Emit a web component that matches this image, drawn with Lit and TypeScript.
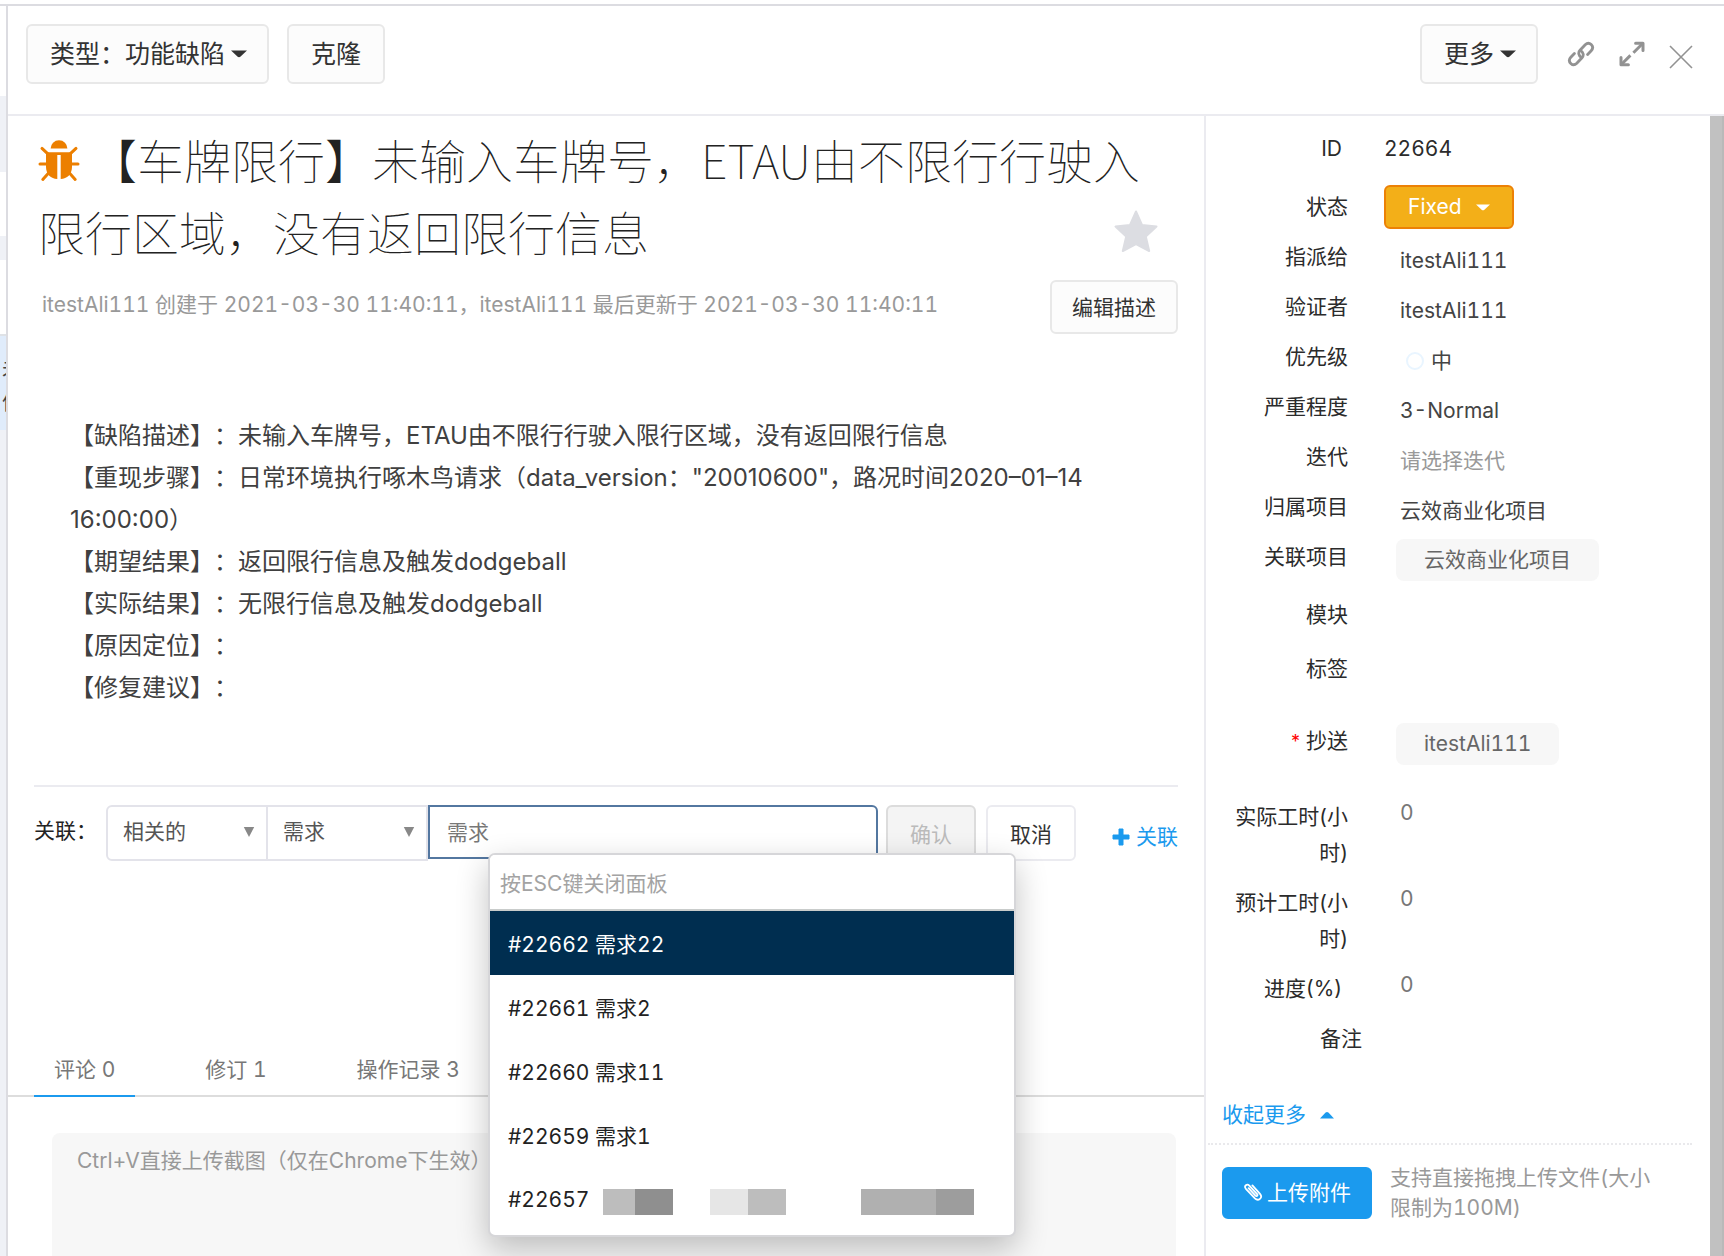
import { LitElement, html, css, nothing } from "lit";
import { customElement, property } from "lit/decorators.js";
import { classMap } from "lit/directives/class-map.js";

const caretDown = html`<svg class="caret" width="16" height="8" viewBox="0 0 16 8" aria-hidden="true">
  <path d="M0 0.5H16L9.6 6.6Q8 7.8 6.4 6.6Z" fill="currentColor" />
</svg>`;

const bugIcon = html`<svg class="bug" width="42" height="42" viewBox="0 0 42 42" role="img" aria-label="缺陷">
  <g fill="#ec7f00">
    <path d="M12.6 8.6A8.4 8.4 0 0 1 29.4 8.6Z" />
    <path d="M8 12.2H34V27C34 34 29 39 22.7 39V15H19.3V39C13 39 8 34 8 27Z" />
  </g>
  <g stroke="#ec7f00" stroke-width="3" stroke-linecap="round" fill="none">
    <path d="M4 8.4L9.6 13.6M38 8.4L32.4 13.6M2 24H8M34 24H40M4.8 39.4L10.6 33M37.2 39.4L31.4 33" />
  </g>
</svg>`;

const linkIcon = html`<svg width="28" height="28" viewBox="0 0 28 28" aria-hidden="true">
  <g fill="none" stroke="#929292" stroke-width="2.8" stroke-linecap="round">
    <path d="M14.2 17.4C11.6 15.6 10.9 12.6 13 10.3L18.2 4.8C20.2 2.8 22.6 3 24.2 4.6C26 6.4 26 8.8 24.2 10.7L20.6 14.4" />
    <path d="M13.8 10.6C16.4 12.4 17.1 15.4 15 17.7L9.8 23.2C7.8 25.2 5.4 25 3.8 23.4C2 21.6 2 19.2 3.8 17.3L7.4 13.6" />
  </g>
</svg>`;

const expandIcon = html`<svg width="28" height="28" viewBox="0 0 28 28" aria-hidden="true">
  <g fill="none" stroke="#929292" stroke-width="3">
    <path d="M15.4 12.8L24.4 3.8M12.4 15.4L3.6 24.2" />
    <path d="M17.6 3.2H25V10.6M3 17.6V24.8H10.4" stroke-linecap="round" stroke-linejoin="round" />
  </g>
</svg>`;

const closeIcon = html`<svg width="24" height="24" viewBox="0 0 24 24" aria-hidden="true">
  <path d="M1 1L23 23M23 1L1 23" stroke="#929292" stroke-width="1.6" />
</svg>`;

const starIcon = html`<svg width="44" height="42" viewBox="0 0 44 42" aria-hidden="true">
  <path
    d="M22 1.5L28 15L42.5 16.6L31.8 26.6L35.2 41L22 34L8.8 41L12.2 26.6L1.5 16.6L16 15Z"
    fill="#dcdde2" stroke="#dcdde2" stroke-width="2" stroke-linejoin="round" />
</svg>`;

const plusIcon = html`<svg width="18" height="18" viewBox="0 0 18 18" aria-hidden="true">
  <path d="M7 1H11V7H17V11H11V17H7V11H1V7H7Z" fill="currentColor" stroke="currentColor" stroke-linejoin="round" />
</svg>`;

const clipIcon = html`<svg width="20" height="20" viewBox="0 0 20 20" aria-hidden="true">
  <path
    d="M5.6 7.2L12.4 14.6C13.6 15.8 15.2 14.4 14.1 13.1L6.3 4.6C4 2.2 .6 5 2.9 7.8L11.9 17.4C15.4 20.8 20.2 16.6 17 12.8L9.4 4.4"
    fill="none" stroke="currentColor" stroke-width="1.8" stroke-linecap="round" />
</svg>`;

const baseStyles = css`
  *, *::before, *::after { box-sizing: border-box; }
  button, input, select, textarea { font: inherit; color: inherit; margin: 0; }
  button { cursor: pointer; }
  svg { display: block; flex: none; }
  .btn {
    display: inline-flex;
    align-items: center;
    justify-content: center;
    border: 2px solid #e8e8e8;
    border-radius: 6px;
    background: #fcfcfc;
    color: #333;
    white-space: nowrap;
  }
`;

interface Story {
  id: string;
  name: string;
  masked?: boolean;
}

@customElement("story-picker")
export class StoryPicker extends LitElement {
  @property({ attribute: false }) stories: Story[] = [];

  static styles = [
    baseStyles,
    css`
      :host {
        display: block;
        background: #fff;
        border: 2px solid #d6d6d9;
        border-radius: 7px;
        box-shadow: 0 12px 32px rgba(0, 0, 0, 0.24);
        overflow: hidden;
      }
      .search {
        display: block;
        width: 100%;
        height: 56px;
        padding: 2px 10px 0;
        border: 0;
        border-bottom: 2px solid #c9cccb;
        background: #fff;
        outline: 0;
      }
      .search::placeholder { color: #a3a3a3; opacity: 1; }
      .list { list-style: none; margin: 0; padding: 0 0 4px; font-variant-numeric: tabular-nums; }
      .item {
        display: flex;
        align-items: center;
        height: 64px;
        padding: 0 18px;
        color: #222;
      }
      .item.active { background: #002e50; color: #fff; }
      .mask { display: flex; padding-left: 14px; margin-top: 6px; }
      .m { height: 26px; }
      .a { width: 32px; background: #bdbdbd; }
      .b { width: 38px; background: #8f8f8f; margin-right: 37px; }
      .c { width: 38px; background: #e6e6e6; }
      .d { width: 38px; background: #bdbdbd; margin-right: 75px; }
      .e { width: 75px; background: #b0b0b0; }
      .f { width: 38px; background: #9d9d9d; }
    `,
  ];

  render() {
    return html`
      <input class="search" type="text" placeholder="按ESC键关闭面板" aria-label="搜索需求" />
      <ul class="list" role="listbox" aria-label="需求">
        ${this.stories.map(
          (s, i) => html`<li class=${classMap({ item: true, active: i === 0 })} role="option" aria-selected=${i === 0 ? "true" : "false"}>
            <span>#${s.id} ${s.name}</span>${s.masked
              ? html`<span class="mask" aria-hidden="true">
                  <i class="m a"></i><i class="m b"></i><i class="m c"></i><i class="m d"></i><i class="m e"></i><i class="m f"></i>
                </span>`
              : nothing}
          </li>`
        )}
      </ul>
    `;
  }
}

type Kind = "plain" | "status" | "text" | "priority" | "hint" | "chip" | "number" | "empty";

interface Field {
  label: string;
  value?: string;
  kind: Kind;
  size?: string;
  required?: boolean;
  inset?: "latin" | "outdent";
}

const FIELDS: Field[] = [
  { label: "ID", value: "22664", kind: "plain", size: "h58", inset: "latin" },
  { label: "状态", value: "Fixed", kind: "status" },
  { label: "指派给", value: "itestAli111", kind: "text" },
  { label: "验证者", value: "itestAli111", kind: "text" },
  { label: "优先级", value: "中", kind: "priority" },
  { label: "严重程度", value: "3-Normal", kind: "text" },
  { label: "迭代", value: "请选择迭代", kind: "hint" },
  { label: "归属项目", value: "云效商业化项目", kind: "text" },
  { label: "关联项目", value: "云效商业化项目", kind: "chip", size: "h58" },
  { label: "模块", kind: "empty", size: "h54" },
  { label: "标签", kind: "empty", size: "h72" },
  { label: "抄送", value: "itestAli111", kind: "chip", size: "h76", required: true },
  { label: "实际工时(小时)", value: "0", kind: "number", size: "h86", inset: "latin" },
  { label: "预计工时(小时)", value: "0", kind: "number", size: "h86", inset: "latin" },
  { label: "进度(%)", value: "0", kind: "number", inset: "latin" },
  { label: "备注", kind: "empty", size: "h76", inset: "outdent" },
];

@customElement("field-panel")
export class FieldPanel extends LitElement {
  static styles = [
    baseStyles,
    css`
      :host { display: block; border-left: 2px solid #ebebf0; padding: 15px 18px 0 0; color: #333; }
      .fields { margin: 0; padding: 0 0 0 16px; }
      .row { display: grid; grid-template-columns: 126px minmax(0, 1fr); column-gap: 36px; min-height: 50px; }
      .h54 { min-height: 54px; }
      .h58 { min-height: 58px; }
      .h72 { min-height: 72px; }
      .h76 { min-height: 76px; }
      .h86 { min-height: 86px; }
      .label { text-align: right; line-height: 36px; color: #2b2b2b; }
      .latin .label { padding-right: 6px; }
      .hours .label { padding-right: 0; }
      .outdent .label { margin-right: -14px; }
      .req { color: #f00; font-size: 18px; margin-right: 6px; }
      .value { margin: 0; line-height: 36px; font-variant-numeric: tabular-nums; }
      .plain { color: #2b2b2b; }
      .text, .hint, .priority { padding: 4px 0 0 16px; color: #444; }
      .hint { color: #999; }
      .priority { display: flex; align-items: center; gap: 7px; align-self: start; padding-left: 22px; }
      .ring { width: 18px; height: 18px; border: 2px solid #e9f5ff; border-radius: 50%; }
      .number { padding-left: 16px; color: #777; margin-top: -4px; }
      .chip { padding-left: 12px; }
      .tag { display: inline-block; padding: 0 28px; line-height: 42px; border-radius: 8px; background: #f7f7f7; color: #666; }
      .status { margin-top: -4px; }
      .fixed {
        height: 44px;
        padding: 0 22px;
        gap: 14px;
        border-color: #ec8106;
        background: #f3af18;
        color: #fff;
      }
      .fixed .caret { width: 14px; height: 7px; }
      .toggle {
        display: inline-flex;
        align-items: center;
        gap: 14px;
        margin: 0 0 0 16px;
        padding: 0;
        border: 0;
        background: none;
        color: #1b9aee;
        line-height: 36px;
      }
      .upload { display: flex; align-items: flex-start; margin: 10px 0 0 2px; padding: 20px 26px 0 14px; border-top: 2px dotted #e9e9ec; gap: 18px; }
      .attach { flex: none; width: 150px; height: 52px; padding: 0 0 4px; gap: 4px; border-color: #1b9aee; background: #1b9aee; color: #fff; margin-top: 2px; }
      .tip { margin: -2px 0 0; padding-right: 6px; line-height: 30px; color: #999; font-variant-numeric: tabular-nums; }
    `,
  ];

  private value(f: Field) {
    switch (f.kind) {
      case "status":
        return html`<button class="btn fixed" type="button">${f.value}${caretDown}</button>`;
      case "priority":
        return html`<span class="ring"></span>${f.value}`;
      case "chip":
        return html`<span class="tag">${f.value}</span>`;
      default:
        return f.value ?? nothing;
    }
  }

  render() {
    return html`
      <dl class="fields">
        ${FIELDS.map(
          (f) => html`<div class="row ${f.size ?? ""} ${f.inset ?? ""} ${f.size === "h86" ? "hours" : ""}">
            <dt class="label">${f.required ? html`<span class="req">*</span>` : nothing}${f.label}</dt>
            <dd class="value ${f.kind}">${this.value(f)}</dd>
          </div>`
        )}
      </dl>
      <button class="toggle" type="button">
        收起更多
        <svg width="14" height="8" viewBox="0 0 14 8" aria-hidden="true"><path d="M0 7.5L5.6 1.6Q7 .4 8.4 1.6L14 7.5Z" fill="currentColor" /></svg>
      </button>
      <div class="upload">
        <button class="btn attach" type="button">${clipIcon}上传附件</button>
        <p class="tip">支持直接拖拽上传文件(大小限制为100M)</p>
      </div>
    `;
  }
}

const REPORT = [
  "【缺陷描述】：未输入车牌号，ETAU由不限行行驶入限行区域，没有返回限行信息",
  "【重现步骤】：日常环境执行啄木鸟请求（data_version：\"20010600\"，路况时间2020–01–14 16:00:00）",
  "【期望结果】：返回限行信息及触发dodgeball",
  "【实际结果】：无限行信息及触发dodgeball",
  "【原因定位】：",
  "【修复建议】：",
];

const STORIES: Story[] = [
  { id: "22662", name: "需求22" },
  { id: "22661", name: "需求2" },
  { id: "22660", name: "需求11" },
  { id: "22659", name: "需求1" },
  { id: "22657", name: "", masked: true },
];

@customElement("app-root")
export class AppRoot extends LitElement {
  static styles = [
    baseStyles,
    css`
      :host {
        display: flex;
        flex-direction: column;
        height: 100vh;
        min-width: 1200px;
        padding-top: 4px;
        overflow: hidden;
        background: #fff;
        color: #333;
        font-family: Inter, "Noto Sans CJK SC", sans-serif;
        font-size: 21px;
        text-spacing-trim: space-all;
      }
      .shell { display: flex; flex: 1; min-height: 0; border-top: 2px solid #dcdce1; }

      .behind { display: flex; flex-direction: column; flex: none; width: 6px; overflow: hidden; background: #eff1f6; font-size: 20px; line-height: 34px; color: #444; }
      .gap1 { height: 90px; background: #fff; }
      .gap2 { height: 76px; }
      .gap3 { height: 64px; background: #fff; }
      .gap4 { height: 24px; }
      .gap5 { height: 74px; background: #fff; }
      .gap6 { height: 96px; padding: 16px 0 0 2px; border-top: 2px solid #dfe2e6; background: #e0ecfb; }

      .panel { display: flex; flex-direction: column; flex: 1; min-width: 0; border-left: 2px solid #dcdce1; }
      .toolbar { display: flex; align-items: center; gap: 18px; height: 110px; flex: none; padding: 0 31px 12px 18px; border-bottom: 2px solid #ebebf0; font-size: 25px; }
      .tool { height: 60px; padding: 0 22px 4px; gap: 6px; }
      .menu { padding-right: 20px; }
      .tool .caret { margin-top: 4px; }
      .spacer { flex: 1; }
      .icons { display: flex; align-items: center; gap: 23px; padding-left: 11px; }
      .icon { display: flex; padding: 0; border: 0; background: none; }
      .close { margin-top: 5px; }

      .body { display: flex; flex: 1; min-height: 0; }
      .main { display: flex; flex-direction: column; flex: 1; min-width: 0; padding-top: 7px; }
      .side { flex: none; width: 506px; }
      .bar { flex: none; width: 14px; background: #c1c1c1; border-right: 2px solid #b9b9b9; }

      .title {
        margin: 0 28px 0 30px;
        font-family: "Noto Sans CJK SC", sans-serif;
        font-size: 47px;
        font-weight: 100;
        line-height: 72px;
        color: #222;
      }
      .bug { display: inline-block; vertical-align: -3px; margin-right: 10px; }
      .star { float: right; display: flex; margin: 15px 18px 0 0; padding: 0; border: 0; background: none; }
      .meta { display: flex; justify-content: space-between; align-items: flex-start; margin: 13px 26px 0 34px; }
      .stamp { margin: 0; line-height: 50px; color: #999; font-variant-numeric: tabular-nums; }
      .edit { height: 54px; padding: 0 20px 2px; }
      .report { margin: 81px 26px 0 62px; font-size: 24px; line-height: 42px; color: #404040; }
      .report p { margin: 0; }

      .relate { display: flex; align-items: flex-start; margin: 76px 26px 0; padding-top: 18px; border-top: 2px solid #ebebf0; }
      .caption { flex: none; width: 72px; line-height: 52px; color: #222; }
      .pick { position: relative; flex: none; width: 162px; }
      .pick + .pick { margin-left: -2px; }
      .select {
        width: 100%;
        height: 56px;
        padding: 0 30px 4px 15px;
        border: 2px solid #e3e3ea;
        background: #fff;
        color: #555;
        appearance: none;
      }
      .first { border-radius: 6px 0 0 6px; }
      .arrow { position: absolute; right: 13px; top: 22px; pointer-events: none; }
      .find { position: relative; flex: 1; min-width: 0; margin-right: 8px; }
      .query {
        display: block;
        width: 100%;
        height: 54px;
        padding: 0 17px 2px;
        border: 2px solid #5377a0;
        border-radius: 0 6px 6px 0;
        background: #fff;
        color: #777;
        outline: 0;
      }
      .popup { position: absolute; left: 60px; top: 48px; width: 528px; z-index: 2; }
      .small { width: 90px; height: 56px; padding: 0; margin-right: 10px; }
      .cancel { background: #fff; border-color: #ebebf0; }
      .ok { background: #f4f4f4; border-color: #dcdcdc; color: #bbb; }
      .add { display: inline-flex; align-items: center; gap: 6px; margin-left: 26px; line-height: 64px; color: #1b9aee; text-decoration: none; white-space: nowrap; }

      .tabs { display: flex; gap: 50px; margin-top: 174px; padding-left: 26px; border-bottom: 2px solid #ddd; font-variant-numeric: tabular-nums; }
      .tab { height: 54px; margin-bottom: -2px; padding: 0 20px 2px; border: 0; border-bottom: 2px solid transparent; background: none; color: #777; }
      .tab.on { border-bottom-color: #1b9aee; }
      .comment {
        flex: 1;
        min-height: 120px;
        margin: 36px 28px 0 44px;
        padding: 12px 25px;
        border: 0;
        border-radius: 8px 8px 0 0;
        background: #f7f7f7;
        line-height: 32px;
        resize: none;
        outline: 0;
      }
      .comment::placeholder { color: #999; opacity: 1; }
    `,
  ];

  private select(label: string, value: string, first: boolean) {
    return html`<div class="pick">
      <select class=${classMap({ select: true, first })} aria-label=${label}>
        <option>${value}</option>
      </select>
      <svg class="arrow" width="12" height="10" viewBox="0 0 12 10" aria-hidden="true"><path d="M.8 0H11.2L6 10Z" fill="#888" /></svg>
    </div>`;
  }

  render() {
    return html`
      <div class="shell">
        <div class="behind" aria-hidden="true">
          <div class="gap1"></div>
          <div class="gap2"></div>
          <div class="gap3"></div>
          <div class="gap4"></div>
          <div class="gap5"></div>
          <div class="gap6">未<br />信</div>
        </div>
        <div class="panel">
          <header class="toolbar">
            <button class="btn tool menu" type="button">类型：功能缺陷${caretDown}</button>
            <button class="btn tool" type="button">克隆</button>
            <span class="spacer"></span>
            <button class="btn tool menu" type="button">更多${caretDown}</button>
            <div class="icons">
              <button class="icon" type="button" aria-label="复制链接">${linkIcon}</button>
              <button class="icon" type="button" aria-label="全屏">${expandIcon}</button>
              <button class="icon close" type="button" aria-label="关闭">${closeIcon}</button>
            </div>
          </header>
          <div class="body">
            <main class="main">
              <h1 class="title">${bugIcon}【车牌限行】未输入车牌号，ETAU由不限行行驶入限行区域，没有返回限行信息<button class="star" type="button" aria-label="收藏">${starIcon}</button></h1>
              <div class="meta">
                <p class="stamp">itestAli111 创建于 2021-03-30 11:40:11，itestAli111 最后更新于 2021-03-30 11:40:11</p>
                <button class="btn edit" type="button">编辑描述</button>
              </div>
              <section class="report">${REPORT.map((line) => html`<p>${line}</p>`)}</section>
              <div class="relate">
                <label class="caption" for="query">关联：</label>
                ${this.select("关联类型", "相关的", true)} ${this.select("对象类型", "需求", false)}
                <div class="find">
                  <input class="query" id="query" type="text" .value=${"需求"} />
                  <story-picker class="popup" .stories=${STORIES}></story-picker>
                </div>
                <button class="btn small ok" type="button" disabled>确认</button>
                <button class="btn small cancel" type="button">取消</button>
                <a class="add" href="#relate">${plusIcon}关联</a>
              </div>
              <nav class="tabs" role="tablist">
                <button class="tab on" type="button" role="tab" aria-selected="true">评论 0</button>
                <button class="tab" type="button" role="tab" aria-selected="false">修订 1</button>
                <button class="tab" type="button" role="tab" aria-selected="false">操作记录 3</button>
              </nav>
              <textarea class="comment" aria-label="评论" placeholder="Ctrl+V直接上传截图（仅在Chrome下生效）"></textarea>
            </main>
            <field-panel class="side"></field-panel>
            <div class="bar" aria-hidden="true"></div>
          </div>
        </div>
      </div>
    `;
  }
}
